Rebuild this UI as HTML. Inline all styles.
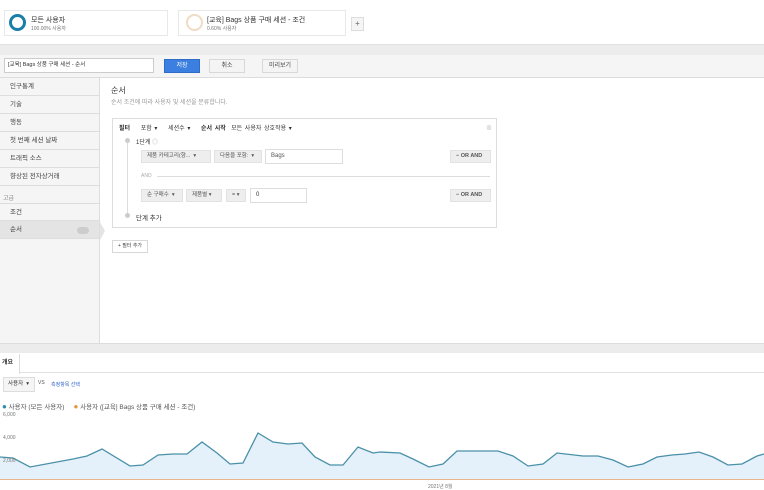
<!DOCTYPE html>
<html><head><meta charset="utf-8"><style>
*{box-sizing:border-box;margin:0;padding:0}
body{width:764px;height:490px;overflow:hidden;background:#fff;font-family:"Liberation Sans","Noto Sans CJK KR",sans-serif;font-size:7px;color:#333;position:relative}
.a{position:absolute}
.card{position:absolute;top:10px;height:26px;border:1px solid #e8e8e8;background:#fff}
.btn{position:absolute;height:14px;border:1px solid #d8d8d8;background:#f4f4f4;font-size:6px;text-align:center;line-height:12px;color:#444}
.side div{height:18px;border-bottom:1px solid #ddd;padding-left:10px;line-height:18px;font-size:6.5px;background:#f5f5f5;color:#444}
.sel{position:absolute;height:13px;background:#eee;border:1px solid #e2e2e2;font-size:5.5px;line-height:11px;padding-left:5px;color:#555}
</style></head><body>
<div class="a" style="left:0;top:0;width:764px;height:45px;background:#fff;border-bottom:1px solid #e0e0e0"></div>
<div class="card" style="left:4px;width:164px"></div>
<div class="a" style="left:9px;top:14px;width:17px;height:17px;border-radius:50%;border:3px solid #1a7fa8"></div>
<div class="a" style="left:31px;top:15px;font-size:7px">모든 사용자</div>
<div class="a" style="left:31px;top:25px;font-size:5px;color:#777">100.00% 사용자</div>
<div class="card" style="left:178px;width:168px"></div>
<div class="a" style="left:186px;top:14px;width:17px;height:17px;border-radius:50%;border:2px solid #f0dcc4"></div>
<div class="a" style="left:207px;top:15px;font-size:7px">[교육] Bags 상품 구매 세션 - 조건</div>
<div class="a" style="left:207px;top:25px;font-size:5px;color:#777">0.60% 사용자</div>
<div class="a" style="left:351px;top:17px;width:13px;height:14px;border:1px solid #ddd;background:#f5f5f5;text-align:center;line-height:12px;font-size:8px;color:#666">+</div>
<div class="a" style="left:0;top:45px;width:764px;height:10px;background:#ececec"></div>
<div class="a" style="left:0;top:55px;width:764px;height:23px;background:#f5f5f5;border-bottom:1px solid #ddd"></div>
<div class="a" style="left:4px;top:58px;width:150px;height:15px;background:#fff;border:1px solid #ccc;font-size:5.5px;line-height:13px;padding-left:3px">[교육] Bags 상품 구매 세션 - 순서</div>
<div class="btn" style="left:164px;top:59px;width:36px;background:#3b7fe0;border-color:#2e6cc8;color:#fff">저장</div>
<div class="btn" style="left:209px;top:59px;width:36px">취소</div>
<div class="btn" style="left:262px;top:59px;width:36px">미리보기</div>
<div class="a side" style="left:0;top:78px;width:100px;height:265px;background:#f5f5f5;border-right:1px solid #ddd">
<div>인구통계</div><div>기술</div><div>행동</div><div>첫 번째 세션 날짜</div><div>트래픽 소스</div><div>향상된 전자상거래</div>
<div style="height:17px;border:none;padding-left:3px;line-height:27px;font-size:6px;color:#888">고급</div>
<div style="border-top:1px solid #ddd">조건</div>
<div style="background:#e4e4e4">순서<span style="float:right;margin:6px 10px 0 0;width:12px;height:7px;border-radius:4px;background:#ccc"></span></div>
</div>
<div class="a" style="left:100px;top:222px;width:0;height:0;border-top:9px solid transparent;border-bottom:9px solid transparent;border-left:5px solid #e4e4e4"></div>
<div class="a" style="left:111px;top:85px;font-size:8px">순서</div>
<div class="a" style="left:111px;top:97px;font-size:6px;color:#999">순서 조건에 따라 사용자 및 세션을 분류합니다.</div>
<div class="a" style="left:112px;top:118px;width:385px;height:110px;border:1px solid #ddd;background:#fff"></div>
<div class="a" style="left:119px;top:123px;font-size:6px;word-spacing:1px"><b>필터</b> &nbsp;&nbsp; 포함 ▾ &nbsp;&nbsp; 세션수 ▾ &nbsp;&nbsp; <b>순서 시작</b> &nbsp;모든 사용자 상호작용 ▾</div>
<div class="a" style="left:486px;top:123px;font-size:6px;color:#bbb">⊗</div>
<div class="a" style="left:127px;top:140px;width:1px;height:76px;background:#ddd"></div>
<div class="a" style="left:125px;top:138px;width:5px;height:5px;border-radius:50%;background:#ccc"></div>
<div class="a" style="left:136px;top:137px;font-size:6px">1단계 <span style="color:#bbb">◎</span></div>
<div class="sel" style="left:141px;top:150px;width:70px">제품 카테고리(향... &nbsp;▾</div>
<div class="sel" style="left:214px;top:150px;width:48px">다음을 포함: &nbsp;▾</div>
<div class="a" style="left:265px;top:149px;width:78px;height:15px;border:1px solid #ddd;font-size:6px;line-height:13px;padding-left:5px;color:#555">Bags</div>
<div class="sel" style="left:450px;top:150px;width:41px;font-weight:bold">− OR AND</div>
<div class="a" style="left:141px;top:173px;font-size:5px;color:#aaa">AND</div>
<div class="a" style="left:157px;top:176px;width:333px;height:1px;background:#ddd"></div>
<div class="sel" style="left:141px;top:189px;width:42px">순 구매수 &nbsp;▾</div>
<div class="sel" style="left:186px;top:189px;width:36px">제품별 ▾</div>
<div class="sel" style="left:226px;top:189px;width:20px">= ▾</div>
<div class="a" style="left:250px;top:188px;width:57px;height:15px;border:1px solid #ddd;font-size:6px;line-height:13px;padding-left:5px">0</div>
<div class="sel" style="left:450px;top:189px;width:41px;font-weight:bold">− OR AND</div>
<div class="a" style="left:125px;top:213px;width:5px;height:5px;border-radius:50%;background:#ccc"></div>
<div class="a" style="left:136px;top:212px;font-size:6.5px">단계 추가</div>
<div class="btn" style="left:112px;top:240px;width:36px;height:13px;line-height:11px;background:#fff;font-size:5px">+ 필터 추가</div>
<div class="a" style="left:0;top:343px;width:764px;height:10px;background:#ececec;border-top:1px solid #ddd"></div>
<div class="a" style="left:0;top:353px;width:764px;height:20px;border-bottom:1px solid #e2e2e2"></div>
<div class="a" style="left:0;top:354px;width:20px;height:20px;background:#fff;border-right:1px solid #ddd;font-size:6px;font-weight:bold;line-height:18px;padding-left:2px">개요</div>
<div class="a" style="left:3px;top:377px;width:32px;height:15px;border:1px solid #ddd;background:#f5f5f5;font-size:5.5px;line-height:13px;padding-left:4px">사용자 &nbsp;▾</div>
<div class="a" style="left:38px;top:380px;font-size:5px;color:#555">VS</div>
<div class="a" style="left:51px;top:381px;font-size:5px;color:#36c">측정항목 선택</div>
<div class="a" style="left:2px;top:401px;font-size:6.5px;color:#555"><span style="color:#2a8ea6;font-size:8px">●</span> 사용자 (모든 사용자) &nbsp;&nbsp;&nbsp; <span style="color:#e8943a;font-size:8px">●</span> 사용자 ([교육] Bags 상품 구매 세션 - 조건)</div>
<svg class="a" style="left:0;top:410px" width="764" height="80" viewBox="0 410 764 80">
<polygon fill="#e4f1fa" points="0,457 13,458 30,467 73,459 87,456 102,449 130,466 143,465 158,455 173,454 187,454 202,442 217,453 230,464 243,463 258,433 273,442 288,444 302,443 315,457 330,465 343,465 358,447 373,453 380,452 400,453 413,459 429,467 443,464 457,451 498,451 513,456 528,466 543,464 557,453 583,456 598,456 613,460 628,467 643,464 657,457 672,455 685,454 699,452 713,457 728,465 742,464 757,456 764,454 764,479 0,479"/>
<polyline fill="none" stroke="#4a90a8" stroke-width="1.3" points="0,457 13,458 30,467 73,459 87,456 102,449 130,466 143,465 158,455 173,454 187,454 202,442 217,453 230,464 243,463 258,433 273,442 288,444 302,443 315,457 330,465 343,465 358,447 373,453 380,452 400,453 413,459 429,467 443,464 457,451 498,451 513,456 528,466 543,464 557,453 583,456 598,456 613,460 628,467 643,464 657,457 672,455 685,454 699,452 713,457 728,465 742,464 757,456 764,454"/>
<line x1="0" y1="479.5" x2="764" y2="479.5" stroke="#e8b48a" stroke-width="1"/>
</svg>
<div class="a" style="left:3px;top:412px;font-size:5px;color:#777">6,000</div>
<div class="a" style="left:3px;top:435px;font-size:5px;color:#777">4,000</div>
<div class="a" style="left:3px;top:458px;font-size:5px;color:#777">2,000</div>
<div class="a" style="left:428px;top:483px;font-size:5px;color:#777">2021년 8월</div>
</body></html>
